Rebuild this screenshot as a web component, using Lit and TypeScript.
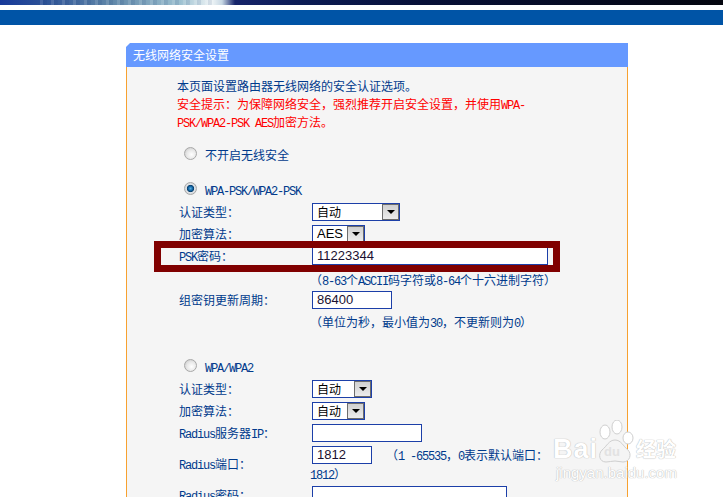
import { LitElement, html, css, nothing } from 'lit';
import { customElement } from 'lit/decorators.js';

// ascii runs sit in a 6px wide mono, like the bitmap font of the router page
const mix = (text: string) =>
  text.split(/([\x20-\x7e]+)/).map((part, i) => (i % 2 ? html`<span class="l">${part}</span>` : part));

// full width punctuation, the page uses it throughout
const COLON = '\uff1a';
const COMMA = '\uff0c';
const OPEN = '\uff08';
const CLOSE = '\uff09';

@customElement('app-root')
export class AppRoot extends LitElement {
  static styles = css`
    :host {
      display: block;
      height: 100vh;
      overflow: hidden;
      background: #fff;
      position: relative;
      font-family: "Noto Sans CJK SC", "Liberation Sans", sans-serif;
      font-size: 12px;
      line-height: 18px;
      color: #003a8c;
    }
    .banner {
      height: 5px;
      background:
        repeating-linear-gradient(90deg, rgba(255, 255, 255, 0.12) 0 3px, rgba(20, 50, 110, 0.1) 3px 7px, rgba(255, 255, 255, 0) 7px 11px) 40px 0 / 172px 100% no-repeat,
        linear-gradient(90deg, #17399a 0, #2a4f96 40px, #5f86a8 110px, #9cc0d0 180px, #eef4f6 212px, #c8d8e4 222px, #16246a 235px, #0c1c55 300px, #071038 420px, #04060f 723px);
    }
    .bar {
      height: 15px;
      margin-top: 5px;
      background: #0054a6;
    }
    .panel {
      position: relative;
      width: 502px;
      margin: 18px 0 0 126px;
    }
    .title {
      height: 24px;
      line-height: 24px;
      padding-left: 7px;
      background: #6699ff;
      color: #fff;
      clip-path: polygon(4px 0, 100% 0, 100% 100%, 0 100%, 0 4px);
    }
    .body {
      box-sizing: border-box;
      height: 500px;
      padding-top: 10px;
      background: #f5f5f5;
      border-left: 1px solid #f7a130;
      border-right: 1px solid #f7a130;
    }
    .l {
      font-family: "Liberation Mono", monospace;
      font-size: 12px;
      line-height: 1;
      letter-spacing: -1.2px;
    }
    .intro {
      padding-left: 50px;
      width: 355px;
    }
    .red {
      color: #f00;
    }
    .radio-row {
      display: flex;
      align-items: center;
      gap: 8px;
      height: 20px;
      padding-left: 57px;
      margin-top: 15px;
    }
    .radio-row .text {
      padding-top: 3px;
    }
    .radio {
      box-sizing: border-box;
      width: 13px;
      height: 13px;
      border-radius: 50%;
      border: 1px solid #a8a8a8;
      background: radial-gradient(circle at 60% 60%, #fff 0, #e8e8e8 50%, #c0c0c0 100%);
    }
    .radio.on {
      background: radial-gradient(circle, #5ab0e0 0, #0f5f9f 30%, #0a3f6a 42%, #e0e4e8 52%, #c8c8c8 100%);
    }
    .row {
      display: grid;
      grid-template-columns: 133px 1fr;
      align-items: center;
      height: 22px;
      padding-left: 52px;
    }
    .group {
      margin-top: 3px;
    }
    .hint {
      padding-left: 183px;
    }
    .field {
      box-sizing: border-box;
      height: 18px;
      line-height: 16px;
      border: 1px solid #1c3fa8;
      background: #fff;
      padding-left: 4px;
      color: #1a1030;
      font-family: "Liberation Sans", sans-serif;
      font-size: 13px;
    }
    .select {
      box-sizing: border-box;
      display: flex;
      justify-content: space-between;
      height: 18px;
      border: 1px solid #1c3fa8;
      background: #fff;
      color: #000;
      padding-left: 4px;
      line-height: 16px;
    }
    .select .latin {
      font-family: "Liberation Sans", sans-serif;
      font-size: 13px;
    }
    .arrow {
      box-sizing: border-box;
      width: 17px;
      display: flex;
      align-items: center;
      justify-content: center;
      background: linear-gradient(#d0d0d0, #ececec);
      border: 1px solid #6c6c6c;
    }
    .arrow i {
      width: 0;
      height: 0;
      border: 4px solid transparent;
      border-top: 4px solid #000;
      border-bottom: 0;
    }
    .port {
      display: grid;
      grid-template-columns: 133px 74px 1fr;
      padding-left: 52px;
      height: 40px;
    }
    .port-label {
      grid-row: span 2;
      align-self: center;
    }
    .port-field {
      margin-top: 2px;
    }
    .port-hint {
      margin-top: 2px;
      white-space: nowrap;
    }
    .port-end {
      grid-column: 2 / 4;
      margin-left: -2px;
    }
    .highlight {
      position: absolute;
      left: 28px;
      top: 198px;
      width: 406px;
      height: 31px;
      box-sizing: border-box;
      border: 7px solid #800000;
    }
    .watermark {
      position: absolute;
      left: 553px;
      top: 420px;
      width: 135px;
      height: 62px;
      color: #fff;
      font-family: "Liberation Sans", sans-serif;
      text-shadow: 0 0 1px #bbb, 0 0 1px #bbb;
    }
    .wm-top {
      display: flex;
      align-items: flex-end;
      height: 44px;
    }
    .wm-bai {
      font-size: 27px;
      font-weight: 700;
      line-height: 30px;
      letter-spacing: 1px;
    }
    .wm-paw {
      position: relative;
      width: 38px;
      height: 44px;
      flex: none;
      margin-left: -2px;
    }
    .wm-paw svg {
      display: block;
    }
    .wm-du {
      position: absolute;
      left: 8px;
      bottom: 5px;
      font-size: 13px;
      font-weight: 700;
      line-height: 14px;
      color: #e2e2e2;
      text-shadow: none;
    }
    .wm-jy {
      font-family: "Noto Sans CJK SC", sans-serif;
      font-size: 20px;
      font-weight: 700;
      line-height: 30px;
      margin-left: 2px;
    }
    .wm-url {
      font-size: 15px;
      line-height: 18px;
      margin-left: 3px;
    }
  `;

  private renderSelect(value: string, width: number, latin = false) {
    return html`<div class="select" style="width:${width}px">
      <span class=${latin ? 'latin' : nothing}>${value}</span>
      <span class="arrow"><i></i></span>
    </div>`;
  }

  private renderInput(value: string, width: number) {
    return html`<div class="field" style="width:${width}px">${value}</div>`;
  }

  render() {
    return html`
      <div class="banner"></div>
      <div class="bar"></div>
      <div class="panel">
        <div class="title">无线网络安全设置</div>
        <div class="body">
          <div class="intro">
            本页面设置路由器无线网络的安全认证选项。
            <div class="red">${mix(`安全提示${COLON}为保障网络安全${COMMA}强烈推荐开启安全设置${COMMA}并使用WPA-PSK/WPA2-PSK AES加密方法。`)}</div>
          </div>

          <div class="radio-row" style="margin-top:12px">
            <span class="radio"></span><span class="text">不开启无线安全</span>
          </div>

          <div class="radio-row">
            <span class="radio on"></span><span class="text">${mix('WPA-PSK/WPA2-PSK')}</span>
          </div>
          <div class="group">
            <div class="row"><span>认证类型${COLON}</span>${this.renderSelect('自动', 88)}</div>
            <div class="row"><span>加密算法${COLON}</span>${this.renderSelect('AES', 53, true)}</div>
            <div class="row"><span>${mix('PSK')}密码${COLON}</span>${this.renderInput('11223344', 236)}</div>
          </div>
          <div class="hint" style="margin-top:4px">${mix(`${OPEN}8-63个ASCII码字符或8-64个十六进制字符${CLOSE}`)}</div>
          <div class="row"><span>组密钥更新周期${COLON}</span>${this.renderInput('86400', 80)}</div>
          <div class="hint" style="margin-top:2px">${mix(`${OPEN}单位为秒${COMMA}最小值为30${COMMA}不更新则为0${CLOSE}`)}</div>

          <div class="radio-row" style="margin-top:24px">
            <span class="radio"></span><span class="text">${mix('WPA/WPA2')}</span>
          </div>
          <div class="group">
            <div class="row"><span>认证类型${COLON}</span>${this.renderSelect('自动', 60)}</div>
            <div class="row"><span>加密算法${COLON}</span>${this.renderSelect('自动', 53)}</div>
            <div class="row"><span>${mix('Radius')}服务器${mix('IP')}${COLON}</span>${this.renderInput('', 110)}</div>
            <div class="port">
              <span class="port-label">${mix('Radius')}端口${COLON}</span>
              <div class="port-field">${this.renderInput('1812', 60)}</div>
              <span class="port-hint">${mix(`${OPEN}1 -65535${COMMA}0表示默认端口${COLON}`)}</span>
              <span class="port-end">${mix(`1812${CLOSE}`)}</span>
            </div>
            <div class="row"><span>${mix('Radius')}密码${COLON}</span>${this.renderInput('', 195)}</div>
          </div>
        </div>
        <div class="highlight"></div>
      </div>

      <div class="watermark">
        <div class="wm-top">
          <span class="wm-bai">Bai</span>
          <span class="wm-paw">
            <svg width="38" height="44" viewBox="0 0 38 44" fill="#fff" stroke="#cfcfcf" stroke-width="1">
              <ellipse cx="9" cy="12" rx="5" ry="7" />
              <ellipse cx="21" cy="7" rx="5" ry="7" />
              <ellipse cx="32" cy="18" rx="5" ry="6" />
              <path d="M19 20c6 0 8 6 13 10 4 4 2 12-5 12-3 0-5-1-8-1s-6 1-9 1c-7 0-8-8-4-12 5-4 7-10 13-10z" fill="#f4f4f4" />
            </svg>
            <span class="wm-du">du</span>
          </span>
          <span class="wm-jy">经验</span>
        </div>
        <div class="wm-url">jingyan.baidu.com</div>
      </div>
    `;
  }
}
